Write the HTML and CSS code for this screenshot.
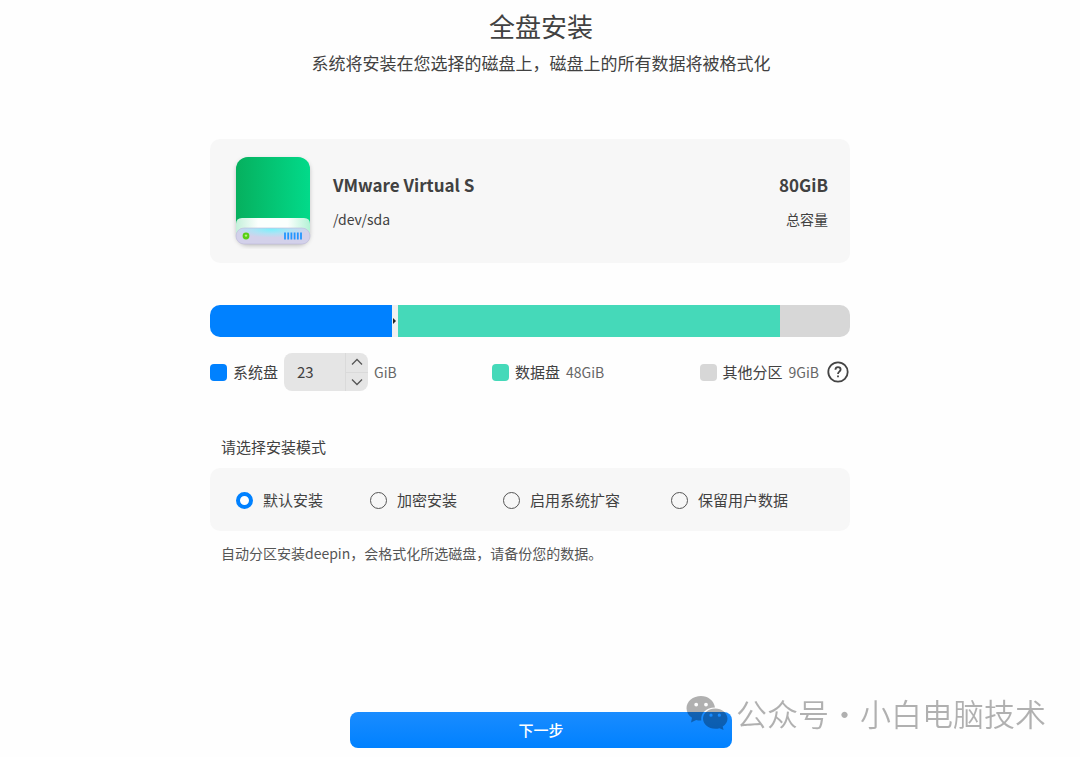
FILE: index.html
```
<!DOCTYPE html>
<html lang="zh-CN">
<head>
	<meta charset="UTF-8">
	<meta name="viewport" content="width=device-width, initial-scale=1">
	<title>全盘安装</title>
	<link rel="stylesheet" href="styles.css">
</head>
<body>
	<header class="header">
		<h1>全盘安装</h1>
		<p>系统将安装在您选择的磁盘上，磁盘上的所有数据将被格式化</p>
	</header>
	<main class="main">
		<section class="disk">
			<svg class="disk-icon" width="84" height="96" viewBox="0 0 84 96" aria-hidden="true">
				<defs>
					<linearGradient id="green" x1="0" y1="0" x2="1" y2="0">
						<stop offset="0" stop-color="#06b05e"/>
						<stop offset="1" stop-color="#02da8a"/>
					</linearGradient>
					<linearGradient id="white" x1="0" y1="0" x2="1" y2="0">
						<stop offset="0" stop-color="#c4f0da"/>
						<stop offset=".3" stop-color="#fbfffd"/>
						<stop offset=".7" stop-color="#fbfffd"/>
						<stop offset="1" stop-color="#b4f2d6"/>
					</linearGradient>
					<radialGradient id="front" cx=".48" cy=".1" r=".5">
						<stop offset="0" stop-color="#7ff0fb"/>
						<stop offset=".5" stop-color="#b0e2f4"/>
						<stop offset="1" stop-color="#d3d1ea"/>
					</radialGradient>
					<filter id="shadow" x="-20%" y="-20%" width="140%" height="140%">
						<feDropShadow dx="0" dy="2" stdDeviation="2" flood-color="#000" flood-opacity=".22"/>
					</filter>
				</defs>
				<rect x="5" y="4" width="74" height="87" rx="12" fill="#b8ecd6" filter="url(#shadow)"/>
				<path d="M5 80V16A12 12 0 0 1 17 4H67A12 12 0 0 1 79 16V80Z" fill="url(#green)"/>
				<path d="M5 84V71Q5 65 11 65H73Q79 65 79 71V84Z" fill="url(#white)"/>
				<rect x="5" y="75" width="74" height="16" rx="8" fill="url(#front)" stroke="#bdb9dc" stroke-width=".6"/>
				<circle cx="15" cy="83" r="3.4" fill="#58cf13"/>
				<circle cx="15" cy="82.600" r="1.2" fill="#b8f57c"/>
				<path d="M54 79.500V86.500M57.2 79.500V86.500M60.4 79.500V86.500M63.6 79.500V86.500M66.8 79.500V86.500M70 79.500V86.500" stroke="#2196ff" stroke-width="1.8"/>
			</svg>
			<div class="disk-name">
				<h2>VMware Virtual S</h2>
				<p>/dev/sda</p>
			</div>
			<div class="disk-size">
				<h2>80GiB</h2>
				<p>总容量</p>
			</div>
		</section>

		<div class="bar">
			<div class="system" style="width: 28.4%"></div>
			<div class="handle"></div>
			<div class="data" style="width: 59.7%"></div>
			<div class="other"></div>
		</div>

		<div class="legend">
			<div class="item">
				<span class="dot system"></span>
				<label for="size">系统盘</label>
				<div class="spin">
					<input type="number" id="size" value="23" min="15" max="71">
					<div class="arrows">
						<button type="button" id="up" aria-label="增加">
							<svg width="12" height="8" viewBox="0 0 12 8"><path d="M1 6.5L6 1.5L11 6.5"/></svg>
						</button>
						<button type="button" id="down" aria-label="减少">
							<svg width="12" height="8" viewBox="0 0 12 8"><path d="M1 1.5L6 6.5L11 1.5"/></svg>
						</button>
					</div>
				</div>
				<span class="unit">GiB</span>
			</div>
			<div class="item">
				<span class="dot data"></span>
				<span>数据盘</span>
				<span class="unit">48GiB</span>
			</div>
			<div class="item">
				<span class="dot other"></span>
				<span>其他分区</span>
				<span class="unit">9GiB</span>
				<button type="button" class="help" aria-label="帮助">
					<svg width="22" height="22" viewBox="0 0 22 22">
						<circle cx="11" cy="11" r="9.7"/>
						<path d="M8.4 8.7C8.5 7 9.6 6.2 11 6.2S13.6 7.1 13.6 8.6C13.6 10.6 11 10.7 11 12.9M11 14.4V16.2"/>
					</svg>
				</button>
			</div>
		</div>

		<fieldset class="mode">
			<legend>请选择安装模式</legend>
			<div class="options">
				<label><input type="radio" name="mode" checked>默认安装</label>
				<label><input type="radio" name="mode">加密安装</label>
				<label><input type="radio" name="mode">启用系统扩容</label>
				<label><input type="radio" name="mode">保留用户数据</label>
			</div>
		</fieldset>
		<p class="tip">自动分区安装deepin，会格式化所选磁盘，请备份您的数据。</p>
	</main>
	<footer class="footer">
		<button type="button" class="next">下一步</button>
	</footer>
	<div class="mark">
		<svg width="42" height="36" viewBox="0 0 42 36" aria-hidden="true">
			<path fill-rule="evenodd" d="M15 1C7 1 .5 6.300 .5 13.300C.5 17.200 2.600 20.600 6 22.800L5 27.600L10.200 24.900C11.800 25.300 13.300 25.500 15.300 25.400C14.200 18.500 20.300 12.400 29 12.500C28 5.700 22 1 15 1ZM10.200 7.700a1.900 1.900 0 1 1 0 3.800a1.900 1.900 0 0 1 0-3.800ZM20 7.700a1.900 1.900 0 1 1 0 3.800a1.900 1.900 0 0 1 0-3.800Z"/>
			<path fill-rule="evenodd" d="M29.200 13.400C22.400 13.400 17 18 17 23.600S22.400 33.800 29.200 33.800C30.800 33.800 32.200 33.600 33.500 33.200L37.600 35L36.700 31.600C39.700 29.700 41.500 26.900 41.500 23.600C41.500 18 36 13.400 29.200 13.400ZM25 18.600a1.600 1.600 0 1 1 0 3.200a1.600 1.600 0 0 1 0-3.200ZM33.300 18.600a1.600 1.600 0 1 1 0 3.200a1.600 1.600 0 0 1 0-3.200Z"/>
		</svg>
		<span>公众号</span>
		<span>·</span>
		<span>小白电脑技术</span>
	</div>
<script>
	const size = document.getElementById('size');
	document.getElementById('up').onclick = function(){
		size.stepUp();
	};
	document.getElementById('down').onclick = function(){
		size.stepDown();
	};
</script>
</body>
</html>
```

FILE: styles.css
```
*{margin: 0;padding: 0;box-sizing: border-box;}
body{
	min-height: 100vh;
	display: flex;
	flex-direction: column;
	position: relative;
	background: #fefefe;
	color: #414141;
	font: 15px/22px "Noto Sans CJK SC", sans-serif;
}
button,input{
	font: inherit;
	color: inherit;
	border: 0;
	background: none;
}
.header{
	padding: 8px 0 0 2px;
	text-align: center;
}
.header h1{
	font-size: 26px;
	line-height: 36px;
	font-weight: 400;
}
.header p{
	margin-top: 6px;
	font-size: 17px;
	line-height: 26px;
}
.main{
	width: 100%;
	max-width: 660px;
	margin: 0 auto;
	padding: 63px 20px 0 0;
}
.disk{
	display: flex;
	align-items: center;
	padding: 14px 22px 14px 21px;
	background: #f7f7f7;
	border-radius: 10px;
}
.disk-name{
	flex: 1;
	margin-left: 18px;
}
.disk-size{
	text-align: right;
}
.disk h2{
	font-size: 17px;
	line-height: 26px;
}
.disk p{
	margin-top: 10px;
	font-size: 14px;
}
.system{background: #0081ff;}
.data{background: #45d9b9;}
.other{background: #d7d7d7;}
.bar{
	display: flex;
	height: 32px;
	margin-top: 42px;
	border-radius: 10px;
	overflow: hidden;
}
.bar .other{
	flex: 1;
}
.handle{
	display: flex;
	align-items: center;
	justify-content: center;
	width: 6px;
	background: #f0f0f0;
	cursor: ew-resize;
}
.handle::after{
	content: "";
	border: 3px solid transparent;
	border-left-color: #222;
	border-right: 0;
}
.legend{
	display: flex;
	justify-content: space-between;
	margin-top: 16px;
}
.item{
	display: flex;
	align-items: center;
	gap: 6px;
	height: 38px;
}
.dot{
	width: 17px;
	height: 17px;
	border-radius: 4px;
}
.unit{
	font-size: 14px;
	color: #666;
}
.spin{
	display: flex;
	width: 84px;
	height: 38px;
	background: #e5e5e5;
	border-radius: 8px;
}
.spin input{
	flex: 1;
	min-width: 0;
	padding-left: 13px;
	appearance: textfield;
	outline: 0;
}
.spin input::-webkit-inner-spin-button{
	appearance: none;
}
.arrows{
	display: flex;
	flex-direction: column;
	width: 23px;
	border-left: 1px solid #dadada;
}
.arrows button{
	flex: 1;
	display: flex;
	align-items: center;
	justify-content: center;
}
.arrows button + button{
	border-top: 1px solid #dadada;
}
.arrows svg{
	fill: none;
	stroke: #555;
	stroke-width: 1.3;
}
.help{
	width: 22px;
	height: 22px;
	margin: 0 1px 0 2px;
}
.help svg{
	display: block;
	fill: none;
	stroke: #444;
	stroke-width: 1.8;
}
.mode{
	margin-top: 45px;
	border: 0;
}
.mode legend{
	padding-left: 11px;
}
.options{
	display: grid;
	grid-template-columns: 134px 133px 168px auto;
	align-items: center;
	margin-top: 10px;
	padding: 21px 26px 20px;
	background: #f7f7f7;
	border-radius: 10px;
}
.options label{
	display: flex;
	align-items: center;
	gap: 10px;
}
.options input{
	appearance: none;
	width: 17px;
	height: 17px;
	border: 1px solid #555;
	border-radius: 50%;
}
.options input:checked{
	border: 4px solid #0081ff;
	background: #fff;
}
.tip{
	margin-top: 11px;
	padding-left: 11px;
	font-size: 14px;
	color: #555;
}
.footer{
	margin-top: auto;
	padding: 20px 0 9px 2px;
	text-align: center;
}
.next{
	width: 382px;
	max-width: 100%;
	height: 36px;
	background: linear-gradient(#1a8cff, #0081ff);
	border-radius: 8px;
	color: #fff;
	font-weight: 500;
	vertical-align: top;
}
.mark{
	position: absolute;
	right: 34px;
	bottom: 24px;
	display: flex;
	align-items: center;
	font-size: 31px;
	line-height: 40px;
	font-weight: 350;
	opacity: .3;
	color: #000;
	pointer-events: none;
}
.mark svg{
	margin-right: 8px;
}
```
